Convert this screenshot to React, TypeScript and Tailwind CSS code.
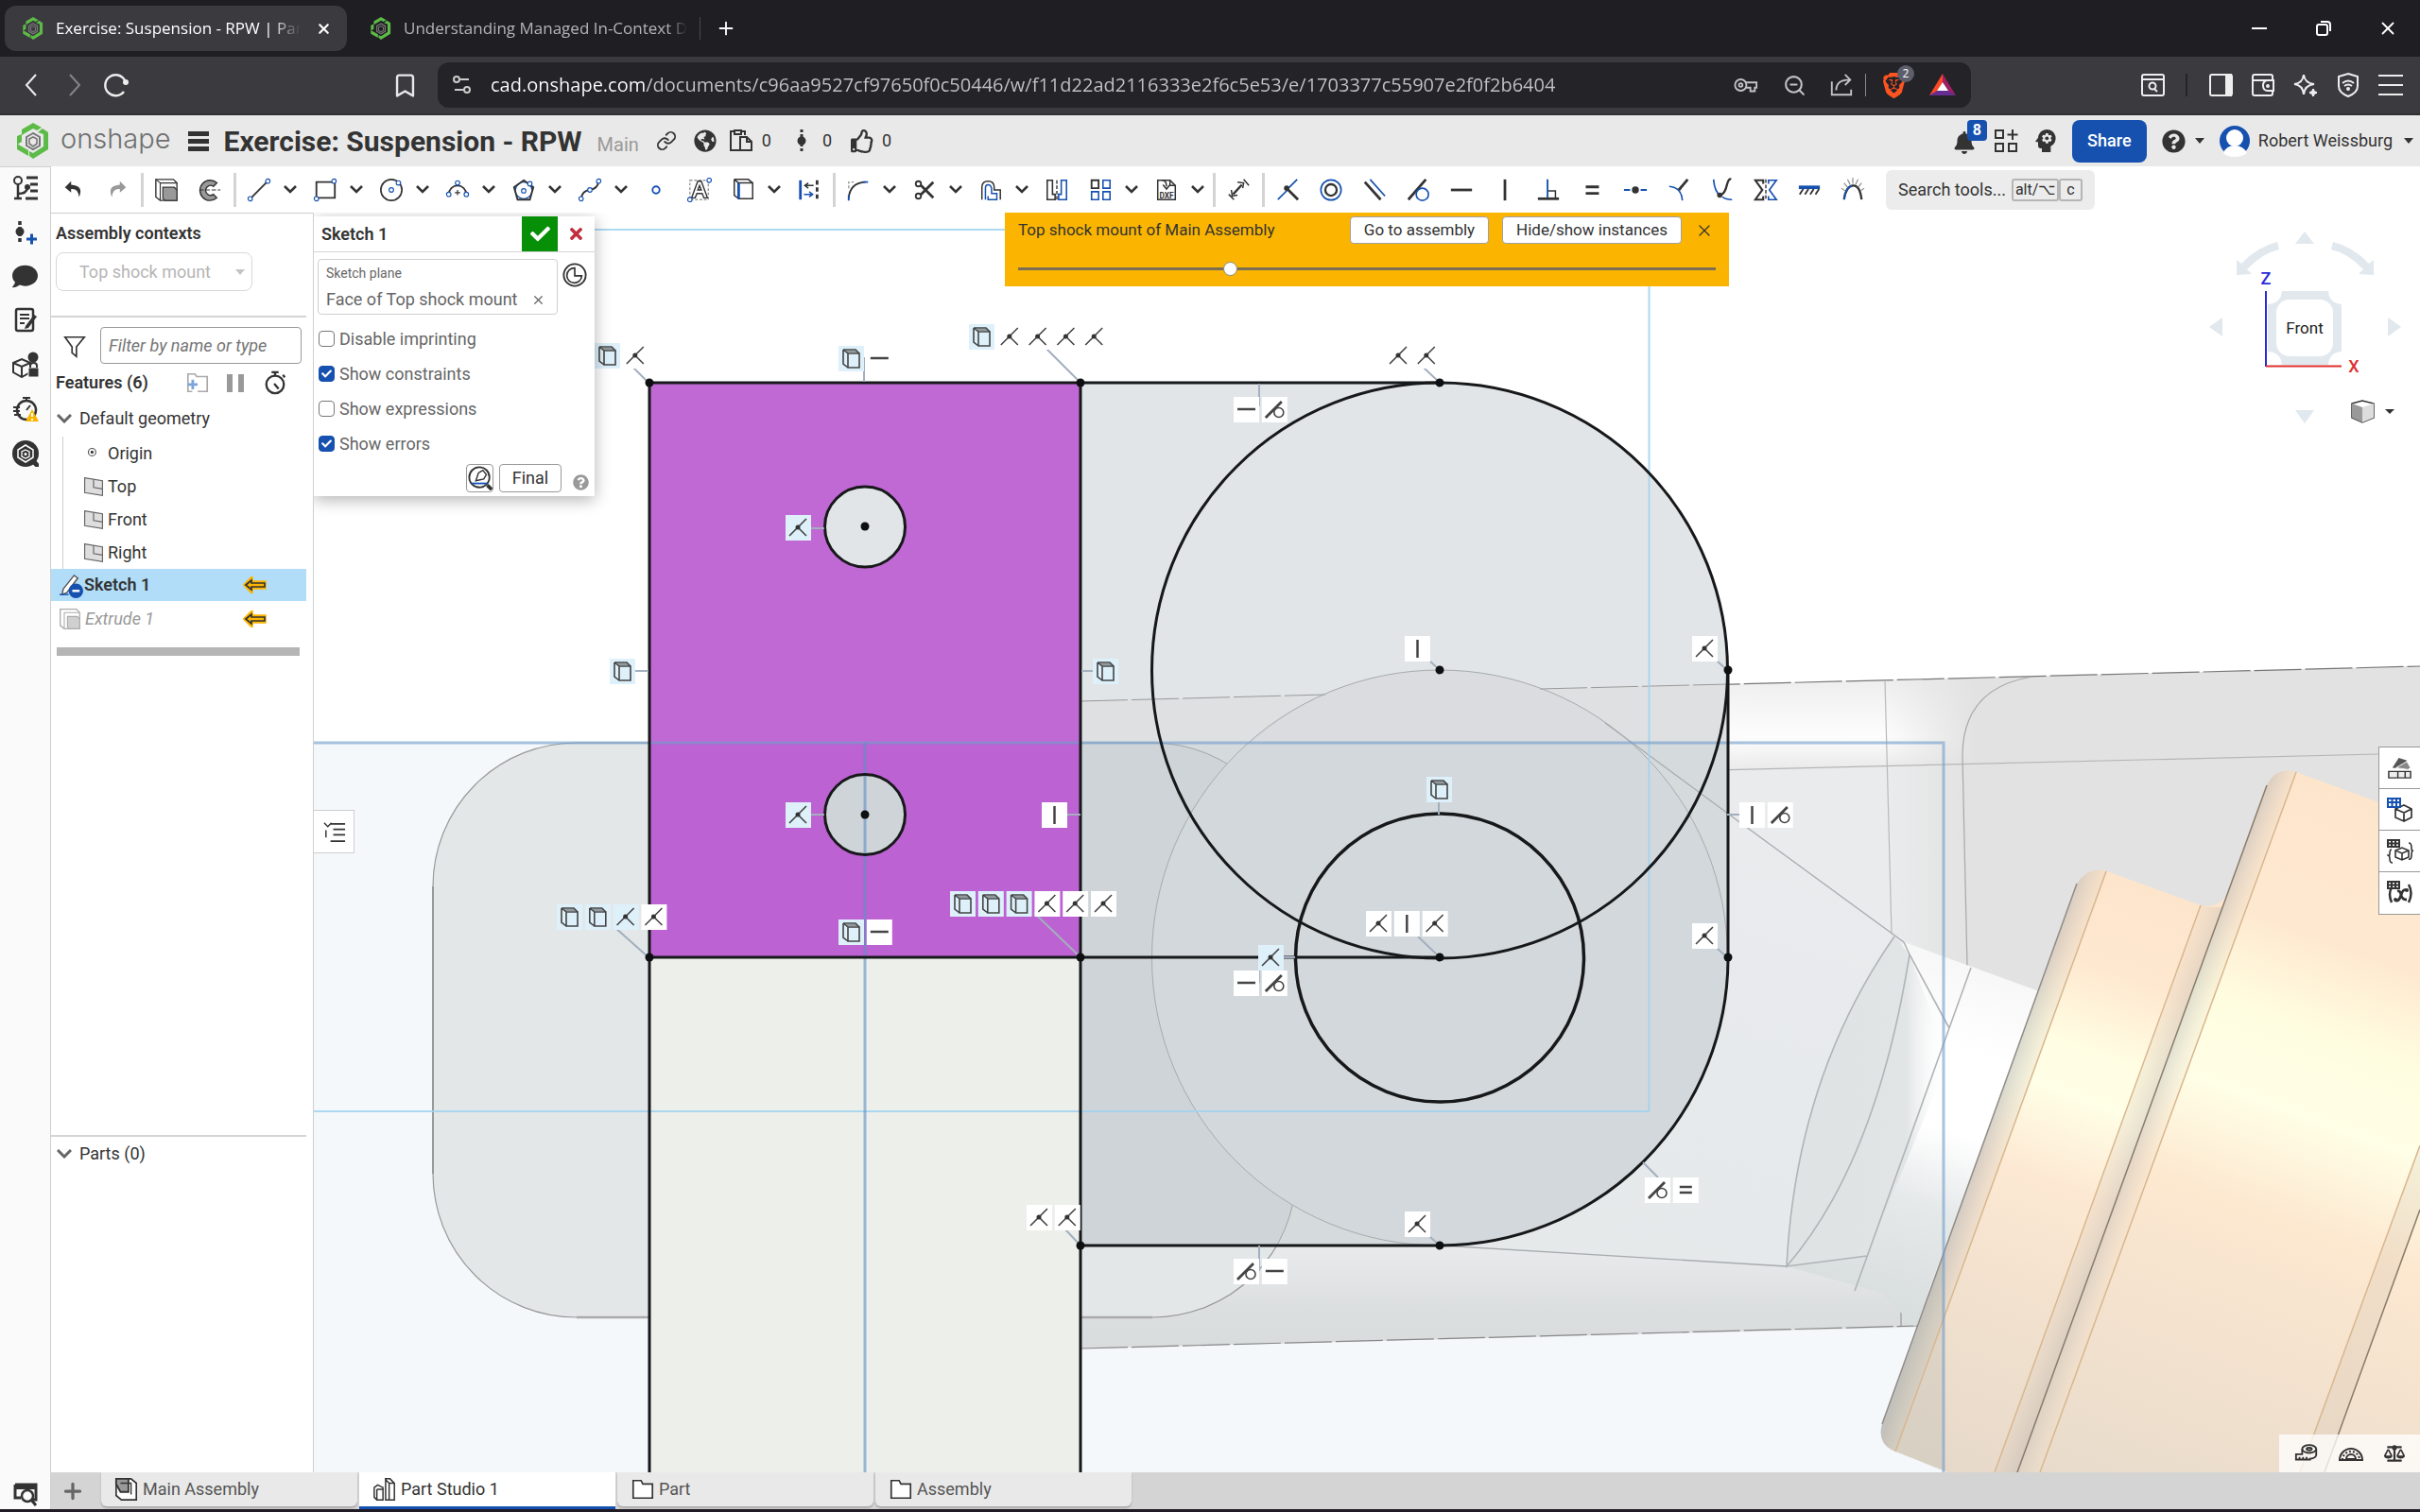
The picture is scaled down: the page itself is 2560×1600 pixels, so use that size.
import type { ReactNode } from 'react'
import { Bookmark, Link, Plus, X, ZoomOut } from 'lucide-react'
import { FaBalanceScale, FaBell, FaComment, FaGlobeAmericas, FaQuestionCircle, FaRegThumbsUp, FaCheck, FaTimes } from 'react-icons/fa'
import { MdPsychology } from 'react-icons/md'
import { SiBrave } from 'react-icons/si'

const INK = '#333333'
const BLUE = '#1651b0'

function Icon({ children, size = 28, className = '' }: { children: ReactNode; size?: number; className?: string }) {
  return (
    <svg width={size} height={size} viewBox="0 0 28 28" fill="none" stroke={INK} strokeWidth="2" className={`shrink-0 ${className}`} aria-hidden="true">
      {children}
    </svg>
  )
}

function Dot({ x, y }: { x: number; y: number }) {
  return <circle cx={x} cy={y} r="2.5" fill="#fff" stroke={BLUE} strokeWidth="1.2" />
}

function OnshapeMark({ size = 26 }: { size?: number }) {
  return (
    <svg width={size} height={size} viewBox="0 0 34 38" className="shrink-0" aria-hidden="true">
      <path d="M17 0 5 7v5L0 14v9l5-3v-7l12-7 4 2 5-3z" fill="#5cbb46" />
      <path d="M22 10 27 6l6 4v18l-16 10-4-3v-5l4 2 11-7V12z" fill="#5cbb46" />
      <path d="M0 22v6l12 7v-6l-7-4z" fill="#5cbb46" />
      <path d="M17 11 10 15v9l7 4 7-4v-9z" fill="none" stroke="#777" strokeWidth="2" />
      <path d="M17 15 13 17v5l4 3 4-3v-5z" fill="none" stroke="#777" strokeWidth="1.6" />
    </svg>
  )
}

function Cube() {
  return (
    <g fill="none" stroke="#444" strokeWidth="1.6">
      <path d="M10 8h12v15H10zM5 4h13l4 4M5 4v15l5 4M5 4l5 4" />
      <path d="M8 6h12" strokeWidth="1" />
    </g>
  )
}

/* ---------- browser chrome ---------- */

function TabStrip() {
  return (
    <div className="flex h-[60px] items-center bg-[#1f1e23] text-[17px] text-white font-['Open_Sans',sans-serif]">
      <div className="ml-[5px] flex h-12 w-[362px] items-center rounded-xl bg-[#3b3a3f] pl-[18px] pr-4">
        <OnshapeMark size={24} />
        <span className="ml-3 min-w-0 flex-1 whitespace-nowrap [mask-image:linear-gradient(to_right,#000_88%,transparent)]">
          Exercise: Suspension - RPW | Part
        </span>
        <button className="ml-4" aria-label="Close tab"><X size={17} strokeWidth={3} /></button>
      </div>
      <div className="flex w-[366px] items-center pl-6 text-[#b4b4b8]">
        <OnshapeMark size={24} />
        <span className="ml-3 whitespace-nowrap [mask-image:linear-gradient(to_right,#000_93%,transparent)]">
          Understanding Managed In-Context D
        </span>
      </div>
      <div className="ml-[7px] h-6 w-px bg-[#4a494e]" />
      <button className="ml-4" aria-label="New tab"><Plus size={22} /></button>
      <div className="ml-auto flex items-center">
        <button aria-label="Minimize" className="flex w-[68px] justify-center"><span className="h-0.5 w-4 bg-white" /></button>
        <button aria-label="Restore" className="flex w-[68px] justify-center">
          <svg width="18" height="18" viewBox="0 0 18 18" fill="none" stroke="#fff" strokeWidth="2"><rect x="2" y="5" width="11" height="11" rx="2" /><path d="M6 2h7q3 0 3 3v7" /></svg>
        </button>
        <button aria-label="Close" className="flex w-[68px] justify-center"><X size={22} strokeWidth={2} /></button>
      </div>
    </div>
  )
}

function NavBar() {
  return (
    <div className="flex h-[62px] items-center border-b-2 border-[#302f34] bg-[#3b3a3f] text-[#e8e8ea]">
      <button aria-label="Back" className="ml-5"><Icon><path d="M18 3 8 14l10 11" stroke="#eee" /></Icon></button>
      <button aria-label="Forward" className="ml-4"><Icon><path d="m10 3 10 11-10 11" stroke="#85848a" /></Icon></button>
      <button aria-label="Reload" className="ml-4">
        <Icon><path d="M23 21A11 11 0 1 1 24 9" stroke="#eee" strokeWidth="2.4" /><circle cx="25" cy="11" r="3" fill="#eee" stroke="none" /></Icon>
      </button>
      <button aria-label="Bookmark" className="ml-[278px]"><Bookmark size={29} strokeWidth={2} /></button>
      <div className="ml-5 flex h-12 flex-1 items-center rounded-xl bg-[#242328] pl-2">
        <Icon className="ml-1"><g stroke="#ccc"><circle cx="8" cy="8" r="3" /><path d="M12 8h9M6 19h9" /><circle cx="19" cy="19" r="3" /></g></Icon>
        <input
          aria-label="Address"
          readOnly
          className="ml-4 min-w-0 flex-1 bg-[linear-gradient(to_right,#fff_163px,#c3c3c7_163px)] bg-clip-text text-xl text-transparent outline-none font-['Open_Sans',sans-serif]"
          value="cad.onshape.com/documents/c96aa9527cf97650f0c50446/w/f11d22ad2116333e2f6c5e53/e/1703377c55907e2f0f2b6404"
        />
        <div className="flex items-center text-[#c3c3c7]">
          <Icon size={26} className="mr-[26px]"><g stroke="#c3c3c7"><circle cx="8" cy="14" r="6.5" /><circle cx="8" cy="14" r="2" /><path d="M13 11h13v6h-2v4h-5v-4h-6" /></g></Icon>
          <ZoomOut size={25} className="mr-6" />
          <Icon size={26} className="mr-3"><g stroke="#c3c3c7"><path d="M3 10v15h22v-6" /><path d="M8 20q0-12 15-12M18 2l6 6-6 6" /></g></Icon>
          <div className="h-6 w-px bg-[#8a898e]" />
          <div className="relative ml-4 mr-6">
            <SiBrave size={27} color="#ff5420" />
            <span className="absolute -right-2 -top-2 flex h-[18px] w-[18px] items-center justify-center rounded-full bg-[#5d5e6c] text-xs text-white font-['Open_Sans',sans-serif]">2</span>
          </div>
          <svg width="28" height="24" viewBox="0 0 28 24" className="mr-4"><path d="M14 0v9L8 19l-8 4z" fill="#ff4724" /><path d="m14 0 14 23-8-4-6-10z" fill="#9e1f63" /><path d="m0 23 8-5h12l8 5z" fill="#662d91" /><path d="m14 9 6 9H8z" fill="#fff" /></svg>
        </div>
      </div>
      <div className="ml-[178px] mr-[17px] flex items-center gap-[17px]">
        <Icon><g stroke="#eee"><rect x="3" y="3" width="23" height="22" rx="2" /><path d="M3 8h23" /><circle cx="14" cy="15" r="3.5" /><path d="m16 18 3 3" /></g></Icon>
        <div className="mx-1 h-6 w-0.5 bg-[#242328]" />
        <Icon><g stroke="#eee"><rect x="3" y="3" width="23" height="22" rx="2" /><path d="M20 3h5v22h-5z" fill="#eee" /></g></Icon>
        <Icon><g stroke="#eee"><path d="M24 9V5q0-2-2-2H5Q3 3 3 5v18q0 2 2 2h17q2 0 2-2v-3M3 9h22v11h-6q-5 0-5-5.5t5-5.5" /><circle cx="19" cy="15" r="1" /></g></Icon>
        <Icon><g stroke="#eee"><path d="M12 3q1 9 11 10-10 1-11 11Q11 14 2 13 11 12 12 3z" /><path d="M22 18q0 4 4 4-4 0-4 4 0-4-4-4 4 0 4-4z" fill="#eee" /></g></Icon>
        <Icon><g stroke="#eee"><path d="m14 2 10 3v10q0 7-10 11Q4 22 4 15V5z" /><path d="M8 12q6-5 12 0M10 15q4-3 8 0" /><circle cx="14" cy="18" r="1" /></g></Icon>
        <Icon><path d="M1 4h26M1 14h26M1 24h26" stroke="#eee" /></Icon>
      </div>
    </div>
  )
}

/* ---------- document header ---------- */

function Header() {
  return (
    <header className="flex h-[54px] items-center bg-[#e9e9e9] text-lg text-[#333]">
      <div className="ml-4 flex items-center gap-2.5">
        <OnshapeMark size={38} />
        <span className="-mt-1 text-[29px] font-light text-[#6f6f6f] font-['Inter',sans-serif]">onshape</span>
      </div>
      <button aria-label="Menu" className="ml-[18px] flex w-[22px] flex-col gap-[3px]">
        <span className="h-[5px] bg-[#333]" /><span className="h-[5px] bg-[#333]" /><span className="h-[5px] bg-[#333]" />
      </button>
      <h1 className="ml-4 mt-0.5 text-[30px] font-bold">Exercise: Suspension - RPW</h1>
      <span className="ml-4 mt-2 text-xl text-[#9a9a9a]">Main</span>
      <Link size={22} className="ml-[18px]" />
      <FaGlobeAmericas size={24} className="ml-[18px]" />
      <Icon className="ml-3"><path d="M8 4H3v20h9M18 8V4h-5M7 3h7v4H7z" /><path d="M13 10h7l5 5v9H13zM20 10v5h5" /></Icon>
      <span className="ml-2">0</span>
      <Icon className="ml-[18px]"><path d="M14 2v24" strokeWidth="3" strokeDasharray="3 2" /><circle cx="14" cy="14" r="4.5" fill={INK} stroke="none" /></Icon>
      <span className="ml-2">0</span>
      <FaRegThumbsUp size={25} className="ml-5" />
      <span className="ml-2">0</span>

      <div className="ml-auto flex items-center">
        <button aria-label="Notifications" className="relative mr-[18px]">
          <FaBell size={24} className="mt-1" />
          <span className="absolute -right-3 -top-2 flex h-[22px] w-[21px] items-center justify-center rounded bg-[#1651b0] text-base font-bold text-white">8</span>
        </button>
        <Icon><path d="M3 3h8v8H3zM3 17h8v8H3zM17 17h8v8h-8zM21 2v11M15.5 7.5h11" /></Icon>
        <MdPsychology size={32} className="ml-3" />
        <button className="ml-3 h-[45px] w-[79px] rounded-lg bg-[#1651b0] text-lg font-medium text-white">Share</button>
        <FaQuestionCircle size={25} className="ml-4" />
        <span className="ml-[10px] border-x-[5px] border-t-[6px] border-x-transparent border-t-[#333]" />
        <svg width="33" height="33" viewBox="0 0 33 33" className="ml-4"><circle cx="16" cy="16" r="16" fill={BLUE} /><circle cx="16" cy="13" r="9" fill="#fff" /><path d="M4 29q3-8 12-8t13 8q-5 4-13 4T4 29z" fill="#fff" /></svg>
        <span className="ml-2 whitespace-nowrap">Robert Weissburg</span>
        <span className="ml-3 mr-[7px] border-x-[5px] border-t-[6px] border-x-transparent border-t-[#333]" />
      </div>
    </header>
  )
}

/* ---------- sketch toolbar ---------- */

type ToolDef = { name: string; icon: ReactNode; menu?: boolean } | 'sep'

const tools: ToolDef[] = [
  { name: 'Undo', icon: <path d="M11 4 4 11l7 6v-4q8-1 9 9 6-13-9-14z" fill={INK} stroke="none" /> },
  { name: 'Redo', icon: <path d="m17 4 7 7-7 6v-4q-8-1-9 9-6-13 9-14z" fill="#999" stroke="none" /> },
  'sep',
  { name: 'Extrude', icon: <><path d="M2 2h20l4 4v20H7l-5-4z" strokeWidth="1.5" /><path d="M7 6h19M7 6v20M2 2l5 4" strokeWidth="1.2" /><path d="M10 11h13l3 3v12H13l-3-2z" fill="#999" strokeWidth="1.3" /></> },
  { name: 'Revolve', icon: <><path d="M22 6A11.5 11.5 0 1 0 22 23l-4-4a5.5 5.5 0 1 1 0-9z" fill="#999" strokeWidth="1.5" /><path d="M2 14h24" strokeWidth="1.2" strokeDasharray="5 2" /></> },
  'sep',
  { name: 'Line', menu: true, icon: <><path d="M4 24 24 4" /><Dot x={4} y={24} /><Dot x={24} y={4} /></> },
  { name: 'Rectangle', menu: true, icon: <><path d="M4 5h21v18H4z" /><Dot x={4} y={24} /><Dot x={24} y={4} /></> },
  { name: 'Circle', menu: true, icon: <><circle cx="14" cy="14" r="12" strokeWidth="1.8" /><Dot x={14} y={14} /><Dot x={22} y={6} /></> },
  { name: 'Arc', menu: true, icon: <><path d="M4 19A10 10 0 0 1 24 19" strokeWidth="1.8" /><path d="M14 14v6M11 17h6" strokeWidth="1.3" /><Dot x={4} y={19} /><Dot x={14} y={6} /><Dot x={24} y={19} /></> },
  { name: 'Polygon', menu: true, icon: <><circle cx="14" cy="14.5" r="9.5" stroke={BLUE} strokeWidth="1.3" /><path d="m14 3 11 8-4 14H7L3 11z" /><Dot x={14} y={15} /><Dot x={21} y={7} /></> },
  { name: 'Spline', menu: true, icon: <><path d="M4 24Q5 15 14 14T24 4" /><Dot x={4} y={24} /><Dot x={14} y={14} /><Dot x={24} y={4} /></> },
  { name: 'Point', icon: <circle cx="14" cy="14" r="4" stroke={BLUE} /> },
  { name: 'Text', icon: <><path d="M3 3h21v22H3z" stroke="#999" strokeWidth="1.5" strokeDasharray="3 2" /><path d="m5 23 7-19h4l7 19h-4l-2-5h-6l-2 5zM12 14h4l-2-5z" strokeWidth="1.5" fill="#fff" /><Dot x={3} y={25} /><Dot x={25} y={3} /></> },
  { name: 'Use', menu: true, icon: <><path d="M9 6h16v18H9zM4 2h16l5 4M4 2v18l5 4M4 2l5 4" strokeWidth="1.6" /><path d="M9 6v18" stroke={BLUE} strokeWidth="3" /></> },
  { name: 'Construction', icon: <><path d="M4 3v22" stroke={BLUE} strokeWidth="3" /><path d="M23 3v22" strokeWidth="3" strokeDasharray="5 3" /><path d="M9 9h10M13 6 9 9l4 3" strokeWidth="1.6" /><path d="M8 19h10M14 16l4 3-4 3" stroke={BLUE} strokeWidth="1.6" /></> },
  'sep',
  { name: 'Fillet', menu: true, icon: <><path d="M3 24Q4 6 22 5" /><path d="M3 12V5h7" stroke="#999" strokeWidth="1.5" strokeDasharray="3 2" /><path d="M3 20v6M19 5h6" stroke={BLUE} /></> },
  { name: 'Trim', menu: true, icon: <><path d="M10 9 24 23M10 19 24 5" strokeWidth="3" /><circle cx="7" cy="7" r="3" /><circle cx="7" cy="21" r="3" /></> },
  { name: 'Offset', menu: true, icon: <><path d="M4 25V11q0-7 7-7t7 7v3h7v11" strokeWidth="1.6" /><path d="M8 25V12q0-4 3-4t4 4v6h6v7H11v-4" stroke={BLUE} strokeWidth="1.6" /></> },
  { name: 'Mirror', icon: <><path d="M3 3h6v16h3v6H3z" strokeWidth="1.7" /><path d="M25 3h-6v16h-3v6h9z" stroke={BLUE} strokeWidth="1.7" /><path d="M14 3v22" strokeWidth="1.5" strokeDasharray="4 2" /></> },
  { name: 'Pattern', menu: true, icon: <><path d="M4 3h8v9H4z" /><path d="M17 3h8v9h-8zM4 16h8v9H4zM17 16h8v9h-8z" stroke={BLUE} strokeWidth="1.7" /></> },
  { name: 'Insert DXF', menu: true, icon: <><path d="M4 25V3h14l6 6v16z" strokeWidth="1.6" /><path d="M18 3v6h6M9 3q5 0 5 7M10 8l4 5 4-5" strokeWidth="1.6" /><text x="14" y="24" textAnchor="middle" fontSize="9" fontWeight="700" fill={INK} stroke="none">DXF</text></> },
  'sep',
  { name: 'Dimension', icon: <><path d="m8 19 10-11" strokeWidth="2.5" /><path d="m6 14 1 7 6-1M13 5l7 1-1 6M20 2l6 7M3 19l6 6" strokeWidth="1.6" /></> },
  'sep',
  { name: 'Coincident', icon: <><path d="M14 14 3 25M15 12 25 2" stroke={BLUE} strokeWidth="1.8" /><path d="m13 12 13 13" strokeWidth="3" /><circle cx="13" cy="12" r="3" fill={INK} stroke="none" /></> },
  { name: 'Concentric', icon: <><circle cx="14" cy="14" r="11.5" stroke={BLUE} strokeWidth="1.8" /><circle cx="14" cy="14" r="6.5" strokeWidth="2.5" /></> },
  { name: 'Parallel', icon: <><path d="m3 5 18 20" strokeWidth="3" /><path d="m9 2 17 19" stroke={BLUE} strokeWidth="1.8" /></> },
  { name: 'Tangent', icon: <><path d="M3 25 23 2" strokeWidth="3" /><circle cx="19" cy="19" r="7" stroke={BLUE} strokeWidth="1.8" /></> },
  { name: 'Horizontal', icon: <path d="M2 14h24" strokeWidth="3" /> },
  { name: 'Vertical', icon: <path d="M14 2v24" strokeWidth="3" /> },
  { name: 'Perpendicular', icon: <><path d="M2 24h24" strokeWidth="3" /><path d="M13 2v21" stroke={BLUE} /><path d="M14 15h8v8" strokeWidth="1.6" /></> },
  { name: 'Equal', icon: <path d="M7 10.5h15M7 18h15" strokeWidth="3" /> },
  { name: 'Midpoint', icon: <><path d="M1 14h7M20 14h7" stroke={BLUE} /><circle cx="14" cy="14" r="4" fill={INK} stroke="none" /></> },
  { name: 'Normal', icon: <><path d="M3 10q14 1 15 16" stroke={BLUE} strokeWidth="1.8" /><path d="m14 14 10-12" strokeWidth="3" /></> },
  { name: 'Pierce', icon: <><path d="M4 2q1 14 8 19M14 22q4 3 11 3" stroke={BLUE} strokeWidth="1.8" /><path d="M12 20Q17 18 19 9t5-7" strokeWidth="2.5" /><circle cx="11" cy="20" r="3" fill={INK} stroke="none" /></> },
  { name: 'Symmetric', icon: <><path d="M11 7V3H2l8 11-8 11h9v-4" strokeWidth="2.3" /><path d="M17 7V3h9l-8 11 8 11h-9v-4" stroke={BLUE} strokeWidth="1.8" /><path d="M14 2v24" strokeWidth="1.5" strokeDasharray="4 2" /></> },
  { name: 'Fix', icon: <><path d="M2 11h24" stroke={BLUE} strokeWidth="4" /><path d="m7 13-4 6M13 13l-4 6M19 13l-4 6M25 13l-4 6" /></> },
  { name: 'Curvature', icon: <><path d="M4 25Q6 10 14 9t10 16" strokeWidth="2.5" /><path d="M4 25Q6 11 13 9" stroke={BLUE} /><path d="M5 15 1 12M8 11 4 6M11 8 8 2M14 7V0M17 8l3-6M20 11l4-5M23 15l4-3" strokeWidth="1.2" stroke="#888" /></> },
]

function Toolbar() {
  return (
    <div className="flex h-[49px] items-center bg-white pl-px">
      {tools.map((t, i) =>
        t === 'sep' ? (
          <div key={i} className="ml-0.5 mr-px h-9 w-[3px] bg-[#d4d4d4]" />
        ) : (
          <div key={i} className="flex items-center">
            <button aria-label={t.name} className="flex w-[46px] justify-center">
              <Icon size={26}>{t.icon}</Icon>
            </button>
            {t.menu && (
              <button aria-label={`${t.name} options`} className="w-6 pl-[3px]">
                <svg width="14" height="9" viewBox="0 0 14 9" fill="none" stroke={INK} strokeWidth="2.6"><path d="m1 1 6 6 6-6" /></svg>
              </button>
            )}
          </div>
        ),
      )}
      <button className="ml-3 flex h-[42px] items-center rounded-md bg-[#ececec] px-[13px] text-lg text-[#333]">
        Search tools...
        <kbd className="ml-1.5 rounded-[3px] border-2 border-[#b5b5b5] px-0.5 text-base leading-5 font-['Roboto',sans-serif]">alt/⌥</kbd>
        <kbd className="rounded-[3px] border-2 border-[#b5b5b5] px-1.5 text-base leading-5 font-['Roboto',sans-serif]">c</kbd>
      </button>
    </div>
  )
}

/* ---------- left rail and feature list ---------- */

function Rail() {
  return (
    <nav className="flex w-[54px] shrink-0 flex-col items-center border-r border-t border-[#cfcfcf] bg-[#fafafa] pt-2 text-[#333]">
      <div className="flex flex-col items-center gap-[19px]">
        <Icon><circle cx="6" cy="6" r="4" /><path d="M6 10v16M2 25h8M6 20q9 0 10-6" strokeWidth="2.5" /><circle cx="16" cy="13" r="3" fill={INK} stroke="none" /><path d="M15 3h12M19 10h8M19 17h8M14 25h13" strokeWidth="3" /></Icon>
        <Icon><path d="M8 2v24" strokeWidth="3.5" strokeDasharray="4 2" /><circle cx="8" cy="13" r="4.5" fill={INK} stroke="none" /><path d="M15 21h11M20.5 15.5v11" stroke={BLUE} strokeWidth="3" /></Icon>
        <FaComment size={27} />
        <Icon><rect x="4" y="2" width="18" height="23" rx="2" strokeWidth="2.5" /><path d="M8 8h10M8 12h10M8 17h5" /><path d="m14 20 9-12 3 2-9 12-4 1z" fill={INK} stroke="none" /></Icon>
        <Icon><path d="m1 12 9-4 9 4v10l-9 5-9-5zM1 12l9 4 9-4M10 16v11" /><circle cx="22" cy="6" r="5.5" fill={INK} stroke="none" /><rect x="17" y="17" width="11" height="10" fill={INK} stroke="#fafafa" strokeWidth="1" /><path d="M19 17v-2q0-3 3.5-3t3.500 3v2" /></Icon>
        <Icon><circle cx="15" cy="15" r="10" strokeWidth="2.5" /><path d="M11 2h8M15 2v3M15 15l4-5M1 12h7M1 16h7M2 20h7" /><path d="m21 14 7 13H14z" fill="#fbb500" stroke="none" /><path d="M21 18v4M21 24v2" stroke="#fff" /></Icon>
        <Icon><circle cx="14" cy="14" r="14" fill={INK} stroke="none" /><path d="m20 20 8 8" strokeWidth="5" /><path d="m14 5 8 5v8l-8 5-8-5v-8z" stroke="#fff" strokeWidth="1.5" /><path d="m14 10 4 2v5l-4 2-4-2v-5z" stroke="#fff" strokeWidth="1.3" /><circle cx="14" cy="14.5" r="1.5" fill="#fff" stroke="none" /></Icon>
      </div>
      <Icon className="mb-0.5 mt-auto"><path d="M3 4h22v16h-4M3 4v14h6" strokeWidth="3" /><path d="M3 4h22v5H3z" fill={INK} stroke="none" /><circle cx="16" cy="16" r="6" strokeWidth="2.5" fill="#fafafa" /><path d="m20 20 5 6" strokeWidth="3" /></Icon>
    </nav>
  )
}

function PlaneIcon() {
  return <Icon size={22} className="mr-1"><path d="M2 2 26 6v20L2 22z" fill="#dedede" stroke="#666" strokeWidth="1.5" /><path d="M14 4v11l12 2" stroke="#666" strokeWidth="1.5" /></Icon>
}

function ContextArrow() {
  return (
    <svg width="26" height="18" viewBox="0 0 26 18" className="ml-auto mr-[41px]"><path d="M2 9 9 2v4h14v6H9v4z" fill="#fbb500" stroke="#fbb500" strokeWidth="3.5" /><path d="M3 9 9 4v3h14v4H9v3z" fill="#fbb500" stroke={INK} strokeWidth="1.7" /></svg>
  )
}

function FeaturePanel() {
  return (
    <aside className="flex w-[278px] shrink-0 flex-col border-r border-t border-[#cfcfcf] bg-white text-lg text-[#333]">
      <div className="mr-[7px] h-[110px] border-b-2 border-[#d4d4d4] pl-[5px]">
        <h2 className="mb-1.5 mt-[7px] text-lg font-semibold leading-7"><label htmlFor="ctx">Assembly contexts</label></h2>
        <div className="relative w-[208px]">
          <select id="ctx" disabled className="h-[41px] w-full appearance-none rounded-lg border border-[#d8d8d8] bg-white pl-6 text-[#b5b5b5] opacity-100">
            <option>Top shock mount</option>
          </select>
          <span className="absolute right-2 top-[18px] border-x-[5px] border-t-[6px] border-x-transparent border-t-[#c4c4c4]" />
        </div>
      </div>
      <div className="mt-2.5 flex items-center pl-3">
        <Icon size={26}><path d="M3 4h22l-9 11v11l-5-4v-7z" strokeWidth="1.8" /></Icon>
        <input aria-label="Filter" placeholder="Filter by name or type" className="ml-3.5 h-[39px] w-[213px] rounded border border-[#999] px-2 italic placeholder:text-[#757575]" />
      </div>
      <div className="mt-0.5 flex h-9 items-center pl-[5px]">
        <h2 className="text-lg font-semibold">Features (6)</h2>
        <Icon size={26} className="ml-auto mr-[18px]"><path d="M8 24H3V4h8l2 3h12v17H14" stroke="#aaa" strokeWidth="1.8" /><path d="M3 16h11M8.5 10.5v11" stroke="#7ba3dc" strokeWidth="3" /></Icon>
        <span className="mr-5 flex gap-1.5"><span className="h-[19px] w-[6px] bg-[#999]" /><span className="h-[19px] w-[6px] bg-[#999]" /></span>
        <Icon size={26} className="mr-[27px]"><circle cx="14" cy="16" r="10" strokeWidth="2.5" /><path d="M10 2h8M14 2v4M23 5l2 3M13 15l5 6" strokeWidth="2.5" /></Icon>
      </div>
      <div className="flex h-[39px] items-center pl-1.5">
        <svg width="16" height="10" viewBox="0 0 16 10" fill="none" stroke="#666" strokeWidth="3"><path d="m1 1 7 7 7-7" /></svg>
        <span className="ml-2">Default geometry</span>
      </div>
      <ul className="ml-3 border-l border-[#cfcfcf] pl-[21px]">
        <li className="flex h-[35px] items-center">
          <Icon size={22} className="mr-1"><circle cx="12" cy="12" r="5" stroke="#555" strokeWidth="1.5" /><circle cx="12" cy="12" r="2" fill={INK} stroke="none" /></Icon>Origin
        </li>
        <li className="flex h-[35px] items-center"><PlaneIcon />Top</li>
        <li className="flex h-[35px] items-center"><PlaneIcon />Front</li>
        <li className="flex h-[35px] items-center"><PlaneIcon />Right</li>
      </ul>
      <div className="mr-[7px] flex h-[34px] items-center bg-[#b1ddf8] pl-2 text-lg font-semibold">
        <Icon size={27}><path d="m5 18 12-15 4 3L9 22l-5 2z" fill="#fff" stroke="#555" strokeWidth="1.5" /><path d="M1 24h10" stroke={BLUE} strokeWidth="1.5" /><circle cx="19" cy="20" r="8" fill={BLUE} stroke="none" /><path d="M15 20h8" stroke="#fff" strokeWidth="2.5" /></Icon>
        Sketch 1
        <ContextArrow />
      </div>
      <div className="mr-[7px] flex h-[37px] items-center pl-2 italic text-[#999]">
        <Icon size={24} className="mr-1"><g stroke="#aaa"><path d="M2 2h20l4 4v20H7l-5-4z" strokeWidth="1.5" /><path d="M7 6h19M7 6v20" strokeWidth="1.2" /><path d="M11 11h12l3 3v12H13l-2-2z" fill="#d0d0d0" strokeWidth="1.3" /></g></Icon>
        Extrude 1
        <ContextArrow />
      </div>
      <div className="ml-1.5 mr-[14px] mt-3 h-[9px] bg-[#b5b5b5]" />
      <div className="mr-[7px] mt-auto h-[357px] border-t-2 border-[#d4d4d4] pl-1.5">
        <div className="flex h-9 items-center">
          <svg width="16" height="10" viewBox="0 0 16 10" fill="none" stroke="#666" strokeWidth="3"><path d="m1 1 7 7 7-7" /></svg>
          <span className="ml-2">Parts (0)</span>
        </div>
      </div>
    </aside>
  )
}

/* ---------- floating panels over the canvas ---------- */

function Check({ label, checked }: { label: string; checked?: boolean }) {
  return (
    <label className="flex h-[37px] items-center gap-[5px] text-lg text-[#666]">
      <span className="relative flex h-[17px] w-[17px]">
        <input type="checkbox" defaultChecked={checked} className="h-[17px] w-[17px] appearance-none rounded border border-[#777] bg-white checked:border-[#1651b0] checked:bg-[#1651b0]" />
        {checked && <FaCheck size={11} color="#fff" className="pointer-events-none absolute left-[3px] top-[3px]" />}
      </span>
      {label}
    </label>
  )
}

function SketchDialog() {
  return (
    <section className="absolute left-0 top-1 w-[297px] bg-white shadow-[0_4px_16px_rgba(0,0,0,0.3)]">
      <div className="flex h-[38px] items-center border-b border-[#d4d4d4] pl-2">
        <h2 className="text-lg font-semibold text-[#333]">Sketch 1</h2>
        <button aria-label="Accept" className="ml-auto flex h-[37px] w-[38px] items-center justify-center bg-[#078f07] text-white"><FaCheck size={21} /></button>
        <button aria-label="Cancel" className="ml-2.5 mr-2.5 text-[#c1303d]"><FaTimes size={19} /></button>
      </div>
      <div className="flex px-1 pt-[7px]">
        <div className="h-[59px] w-[254px] rounded border border-[#cfcfcf] px-2 text-[#666]">
          <p className="mt-1 text-sm leading-5">Sketch plane</p>
          <p className="mt-1.5 flex items-center text-lg leading-6">Face of Top shock mount<X size={15} className="ml-auto mr-1" /></p>
        </div>
        <Icon size={26} className="ml-[5px] mt-1"><circle cx="14" cy="14" r="12.5" /><path d="M14 6v9h8A8.5 8.5 0 1 1 14 6z" strokeWidth="1.8" /></Icon>
      </div>
      <div className="pl-[5px] pt-[7px]">
        <Check label="Disable imprinting" />
        <Check label="Show constraints" checked />
        <Check label="Show expressions" />
        <Check label="Show errors" checked />
      </div>
      <div className="flex items-center pb-1 pt-[3px]">
        <button aria-label="Inspect sketch" className="ml-[161px] flex h-[30px] w-[29px] items-center justify-center rounded border border-[#999]">
          <Icon size={26}><circle cx="13" cy="13" r="11.5" /><path d="m9 17 3-9 5-3 4 5-3 5z" strokeWidth="1.5" /><path d="M4 20h18" stroke={BLUE} /><path d="m22 22 5 5" strokeWidth="4" /></Icon>
        </button>
        <button className="ml-1.5 h-[30px] w-[66px] rounded border border-[#999] text-lg leading-6 text-[#333]">Final</button>
        <FaQuestionCircle size={17} color="#999" className="ml-3 mt-2" />
      </div>
    </section>
  )
}

function ContextBanner() {
  return (
    <section className="absolute left-[731px] top-0 h-[78px] w-[766px] bg-[#fbb500] px-3.5 pt-1 text-[17px] text-[#333]">
      <div className="flex items-center">
        <span>Top shock mount of Main Assembly</span>
        <button className="ml-auto h-[29px] rounded border border-[#a0a0a0] bg-white px-3.5">Go to assembly</button>
        <button className="ml-3.5 h-[29px] rounded border border-[#a0a0a0] bg-white px-3.5">Hide/show instances</button>
        <button aria-label="Close banner" className="ml-3.5 mr-0.5"><X size={20} strokeWidth={1.5} /></button>
      </div>
      <input
        type="range"
        aria-label="Context transparency"
        min={0}
        max={100}
        defaultValue={30}
        className="mt-[25px] block h-[3px] w-full appearance-none bg-[#7a6f55] [&::-webkit-slider-thumb]:h-[15px] [&::-webkit-slider-thumb]:w-[15px] [&::-webkit-slider-thumb]:appearance-none [&::-webkit-slider-thumb]:rounded-full [&::-webkit-slider-thumb]:border [&::-webkit-slider-thumb]:border-[#888] [&::-webkit-slider-thumb]:bg-white"
      />
    </section>
  )
}

function SidePanels() {
  return (
    <div className="absolute right-0 top-[565px] flex w-[44px] flex-col divide-y divide-[#999] border border-r-0 border-[#999] bg-white">
      <button aria-label="Appearance" className="flex h-11 items-center justify-center"><Icon size={27}><path d="M6 14 13 3l9 3-4 9z" fill="#555" stroke="none" /><path d="m10 14 12-7 4 7-3 2z" fill="#888" stroke="#fff" strokeWidth="1" /><path d="M2 18h24v7H2zM12 18v7M20 18v7" strokeWidth="1.5" fill="#eee" /></Icon></button>
      <button aria-label="Configurations" className="flex h-11 items-center justify-center"><Icon size={28}><path d="m9 13 9-4 8 4v9l-8 4-9-4zM9 13l9 4 8-4M18 17v9" strokeWidth="1.7" fill="#fff" /><path d="M1 2h13v9H1z" fill="#fff" stroke={BLUE} /><path d="M1 6h13M5.5 2v9M10 2v9" stroke={BLUE} /></Icon></button>
      <button aria-label="Configured features" className="flex h-11 items-center justify-center"><Icon size={28}><path d="m9 13 7-3 7 3v7l-7 3-7-3zM9 13l7 3 7-3M16 16v7M5 12q-2 0-2 4t-2 2q2 0 2 4t3 4M23 5q3 0 3 5t2 3q-2 0-2 5t-3 4" strokeWidth="1.6" /><path d="M1 2h12v7H1z" fill="#fff" /><path d="M1 5.5h12M5 2v7M9 2v7" /></Icon></button>
      <button aria-label="Variables" className="flex h-11 items-center justify-center"><Icon size={28}><path d="M5 8q-4 7 0 16M23 5q5 9 0 19" strokeWidth="2.5" /><path d="M9 22q4 1 6-6t6-5M11 12q3-1 4 4t6 5" strokeWidth="2.8" /><circle cx="9" cy="21" r="2" fill={INK} stroke="none" /><circle cx="21" cy="11" r="2" fill={INK} stroke="none" /><path d="M1 2h12v7H1z" fill="#fff" /><path d="M1 5.5h12M5 2v7M9 2v7" /></Icon></button>
    </div>
  )
}

/* ---------- model drawing ---------- */

type Glyph = 'cube' | 'coin' | 'coinBlue' | 'h' | 'v' | 'tan' | 'eq'

const constraints: [number, number, Glyph[]][] = [
  [629, 363, ['cube', 'coin']],
  [887, 366, ['cube', 'h']],
  [1025, 343, ['cube', 'coin', 'coin', 'coin', 'coin']],
  [1466, 363, ['coin', 'coin']],
  [1305, 420, ['h', 'tan']],
  [831, 545, ['coinBlue']],
  [645, 697, ['cube']],
  [1156, 697, ['cube']],
  [831, 849, ['coinBlue']],
  [1102, 849, ['v']],
  [589, 957, ['cube', 'cube', 'coinBlue', 'coin']],
  [1005, 943, ['cube', 'cube', 'cube', 'coin', 'coin', 'coin']],
  [887, 973, ['cube', 'h']],
  [1486, 673, ['v']],
  [1790, 673, ['coin']],
  [1509, 822, ['cube']],
  [1840, 849, ['v', 'tan']],
  [1445, 964, ['coin', 'v', 'coin']],
  [1790, 977, ['coin']],
  [1331, 1000, ['coinBlue']],
  [1305, 1027, ['h', 'tan']],
  [1740, 1246, ['tan', 'eq']],
  [1486, 1282, ['coin']],
  [1305, 1332, ['tan', 'h']],
  [1086, 1275, ['coin', 'coin']],
]

const leaders =
  'M670 389l16 16M914 378v26M1107 369l35 35M1506 389l17 16M1332 406v24M858 559h14M672 710h14M1144 710h13M858 862h14M1129 862h14' +
  'M650 981l36 32M1094 966l49 47M1513 700l10 9M1817 700l10 9M1522 849v13M1827 862h14M1500 991l23 22M1817 1004l10 9M1358 1013h12' +
  'M1332 1014v26M1738 1230l16 16M1513 1309l10 9M1332 1318v27M1126 1300l17 18'

const points = [
  [687, 405], [1143, 405], [1523, 405], [915, 557], [915, 862], [1523, 709], [1828, 709],
  [687, 1013], [1143, 1013], [1523, 1013], [1828, 1013], [1143, 1318], [1523, 1318],
]

function GlyphShape({ kind }: { kind: Glyph }) {
  if (kind === 'cube') return <Cube />
  if (kind === 'h') return <path d="M4 13h19" strokeWidth="2.5" />
  if (kind === 'v') return <path d="M13.5 4v19" strokeWidth="2.5" />
  if (kind === 'eq') return <path d="M7 10h13M7 16h13" strokeWidth="2.5" />
  if (kind === 'tan') return <><path d="M4 22 21 5" strokeWidth="2.8" /><circle cx="18" cy="16.5" r="5" /></>
  return <><path d="m4 22 9-9 9-9M13 13l9 9" /><circle cx="13" cy="13" r="2.5" fill="#333" stroke="none" /></>
}

function Model() {
  return (
    <svg className="absolute inset-0 h-full w-full" viewBox="332 225 2228 1333" preserveAspectRatio="xMinYMin slice" aria-label="Sketch view">
      <defs>
        <linearGradient id="armTop" x1="0" y1="712" x2="0" y2="815" gradientUnits="userSpaceOnUse">
          <stop offset="0" stopColor="#ececec" /><stop offset="0.65" stopColor="#fdfdfd" /><stop offset="1" stopColor="#e9e9ea" />
        </linearGradient>
        <linearGradient id="armTopL" x1="1143" y1="0" x2="2000" y2="0" gradientUnits="userSpaceOnUse">
          <stop offset="0" stopColor="#dfe0e2" /><stop offset="0.6" stopColor="#dfe0e2" stopOpacity="0.7" /><stop offset="0.85" stopColor="#fff" stopOpacity="0" />
        </linearGradient>
        <linearGradient id="armTopR" x1="1994" y1="0" x2="2090" y2="0" gradientUnits="userSpaceOnUse">
          <stop offset="0" stopColor="#e2e2e2" stopOpacity="0" /><stop offset="1" stopColor="#e2e2e2" />
        </linearGradient>
        <linearGradient id="armBottom" x1="0" y1="1320" x2="0" y2="1425" gradientUnits="userSpaceOnUse">
          <stop offset="0" stopColor="#e9eaec" /><stop offset="0.6" stopColor="#dcdfe0" /><stop offset="1" stopColor="#d8dcdd" />
        </linearGradient>
        <linearGradient id="link" x1="1800" y1="850" x2="1650" y2="1330" gradientUnits="userSpaceOnUse">
          <stop offset="0" stopColor="#e9ebed" /><stop offset="1" stopColor="#e5e9ea" />
        </linearGradient>
        <linearGradient id="neck" x1="2120" y1="1030" x2="2000" y2="1380" gradientUnits="userSpaceOnUse">
          <stop offset="0" stopColor="#f7f7f7" /><stop offset="0.25" stopColor="#fff" /><stop offset="0.48" stopColor="#fff" /><stop offset="0.7" stopColor="#e6e9ea" /><stop offset="1" stopColor="#d9dedf" />
        </linearGradient>
        <linearGradient id="lens" x1="1950" y1="0" x2="2060" y2="0" gradientUnits="userSpaceOnUse">
          <stop offset="0" stopColor="#dfe3e4" /><stop offset="0.6" stopColor="#e1e5e6" /><stop offset="1" stopColor="#fff" stopOpacity="0" />
        </linearGradient>
        <linearGradient id="ringA" x1="2228" y1="922" x2="2005" y2="1536" gradientUnits="userSpaceOnUse">
          <stop offset="0" stopColor="#fde5cc" /><stop offset="0.15" stopColor="#fee8d0" /><stop offset="0.28" stopColor="#fffde2" /><stop offset="0.36" stopColor="#fffee6" /><stop offset="0.5" stopColor="#fde9d3" /><stop offset="0.7" stopColor="#f2e1ce" /><stop offset="1" stopColor="#e7d9ca" />
        </linearGradient>
        <linearGradient id="ringB" x1="2429" y1="817" x2="2158" y2="1558" gradientUnits="userSpaceOnUse">
          <stop offset="0" stopColor="#fde5cc" /><stop offset="0.2" stopColor="#fee9d0" /><stop offset="0.32" stopColor="#fffde0" /><stop offset="0.43" stopColor="#fffee6" /><stop offset="0.57" stopColor="#fde8d0" /><stop offset="0.78" stopColor="#f2e1ce" /><stop offset="1" stopColor="#e8dbcb" />
        </linearGradient>
        <linearGradient id="edgeL" x1="2197" y1="935" x2="2228" y2="946" gradientUnits="userSpaceOnUse">
          <stop offset="0" stopColor="#a3a8ae" stopOpacity="0.4" /><stop offset="1" stopColor="#f5dfc5" stopOpacity="0.2" />
        </linearGradient>
        <linearGradient id="edgeM" x1="2328" y1="958" x2="2360" y2="970" gradientUnits="userSpaceOnUse">
          <stop offset="0" stopColor="#e8d6c2" stopOpacity="0.3" /><stop offset="1" stopColor="#b4b0ac" stopOpacity="0.45" />
        </linearGradient>
        <linearGradient id="edgeR" x1="2398" y1="831" x2="2427" y2="842" gradientUnits="userSpaceOnUse">
          <stop offset="0" stopColor="#a3a8ae" stopOpacity="0.4" /><stop offset="1" stopColor="#f5dfc5" stopOpacity="0.2" />
        </linearGradient>
        <clipPath id="part"><path d="M1143 405H1523A304.5 304.5 0 0 1 1828 709V1013A304.5 304.5 0 0 1 1523 1318H1143z" /></clipPath>
        <clipPath id="planeClip"><path d="M332 786H2056V1558H332z" /></clipPath>
      </defs>

      <path d="M332 225H2560V1558H332z" fill="#fff" />
      <path d="M332 786H2056V1558H332z" fill="#f4f8fb" />

      {/* control arm behind the sketch */}
      <path d="M1143 742 2560 705V1390L1143 1427z" fill="#e2e2e2" />
      <path d="M1143 742 2090 717V808L1143 832z" fill="url(#armTop)" />
      <path d="M1143 742 2000 720V810L1143 832z" fill="url(#armTopL)" />
      <path d="M1994 720 2560 705V800L1994 812z" fill="url(#armTopR)" />
      <path d="M1143 832 2075 808 2081 1050 2056 1404 1143 1427z" fill="#eaebec" />
      <path d="M2000 812 2076 808 2081 1022 2056 1014 2001 988z" fill="url(#armTopR)" />
      <path d="M1143 1318 1523 1320 1890 1340 2056 1370V1403L1143 1427z" fill="url(#armBottom)" />
      <path d="M1523 709Q1620 709 1698 765L2014 997 2157 1049 1890 1340 1523 1318z" fill="url(#link)" />

      <g stroke="#9a9a9a" strokeWidth="1.2" fill="none">
        <path d="M1143 742 2560 705" strokeDasharray="50 4" stroke="#777" />
        <path d="M1143 1427 2028 1403" strokeDasharray="50 4" stroke="#888" />
        <path d="M1770 816 2516 798" stroke="#b5b5b5" />
        <path d="M1994 720 2001 988" stroke="#b9b9b9" />
        <path d="M2150 716Q2076 728 2076 800L2081 1022" stroke="#a8a8a8" />
        <path d="M2011 1385v18" />
      </g>

      {/* neck between link and rings */}
      <path d="M2014 997 2157 1049 2026 1404 1990 1368 1890 1340Q1920 1130 2014 997z" fill="url(#neck)" />
      <path d="M2004 991Q1900 1140 1890 1340L1975 1329 2062 1120 2020 1010z" fill="url(#lens)" />
      <g stroke="#b0b4b6" strokeWidth="1.6" fill="none">
        <path d="M2004 991Q1900 1140 1890 1340Q1985 1230 2020 1010M2014 997l6 13 42 78M2085 1024 1962 1366M1890 1340 1975 1329" />
      </g>

      {/* spring rings */}
      <path d="M2197 935Q2210 916 2229 922L2328 958Q2352 962 2358 940L2134 1558H2060L2005 1536Q1985 1528 1991 1507z" fill="url(#ringA)" />
      <path d="M2398 831Q2408 811 2429 817L2560 865V1558H2134z" fill="url(#ringB)" />
      <path d="M2197 935Q2210 916 2229 922L2005 1536Q1985 1528 1991 1507z" fill="url(#edgeL)" />
      <path d="M2328 958Q2350 962 2352 958L2134 1558H2110z" fill="url(#edgeM)" />
      <path d="M2398 831Q2408 811 2429 817L2158 1558H2134z" fill="url(#edgeR)" />
      <path d="M2560 1212 2433 1558H2459L2560 1280z" fill="#c9b8a6" opacity="0.2" />
      <path d="M2197 935 1991 1507Q1985 1528 2005 1536L2056 1556V1320z" fill="#88a0a0" opacity="0.16" clipPath="url(#planeClip)" />
      <g fill="none" strokeWidth="1.5">
        <path d="M2228 922 2005 1536M2328 958 2110 1558M2429 817 2158 1558M2560 1212 2433 1558" stroke="#d8b78f" />
        <path d="M2197 935 1991 1507" stroke="#8f8b86" />
        <path d="M2398 831 2134 1558M2560 1280 2459 1558" stroke="#8a7b6a" />
      </g>

      {/* rounded bracket behind the column */}
      <rect x="458" y="786" width="913" height="608" rx="152" fill="#e3e7e8" stroke="#999" strokeWidth="1.2" />
      <path d="M458 938v304" stroke="#777" />
      <path d="M610 1394h609" stroke="#aaa" strokeWidth="2.5" />

      {/* sketch region */}
      <path d="M1143 405H1523A304.5 304.5 0 0 1 1828 709V1013A304.5 304.5 0 0 1 1523 1318H1143z" fill="#e1e5e8" />
      <g clipPath="url(#part)">
        <path d="M1143 742 1828 724V786H1143z" fill="#dfe0e2" />
        <path d="M1143 786H1828V1318H1143z" fill="#d5dadd" />
        <rect x="458" y="786" width="913" height="608" rx="152" fill="#ced4d7" stroke="#a2a6a8" />
        <circle cx="1523" cy="1013.5" r="304.5" fill="#d3d8dc" />
        <path d="M1323 786A304.5 304.5 0 0 1 1523 709Q1620 709 1698 765L1727 786z" fill="#dadce0" />
        <path d="M1143 742 1402 735M1629 729 1828 724" stroke="#999" strokeDasharray="50 4" />
        <circle cx="1523" cy="1013.5" r="304.5" fill="none" stroke="#a6abad" />
        <path d="M1698 765 1828 861" stroke="#a6abad" strokeWidth="1.2" />
      </g>
      <path d="M1828 861 2014 997M1523 1318 1890 1340" stroke="#a8acae" strokeWidth="1.4" />

      {/* column */}
      <path d="M687 1013H1143V1558H687z" fill="#edefeb" />
      <path d="M687 405H1143V1013H687z" fill="#c068d4" />
      <path d="M687 786H1143V1013H687z" fill="#bc62d2" />
      <circle cx="915" cy="557.5" r="42.5" fill="#e1e5e8" />
      <circle cx="915" cy="862" r="42.5" fill="#ced4d7" />

      {/* reference planes */}
      <g fill="none">
        <path d="M332 243H1744.5V1176H332" stroke="#9fd2ee" strokeWidth="2" opacity="0.85" />
        <path d="M332 786H2056V1558" stroke="#6f9dcc" strokeWidth="3" opacity="0.6" />
        <path d="M915 786V1558" stroke="#5f8fc4" strokeWidth="3" opacity="0.6" />
      </g>

      <g fill="none" stroke="#16181a" strokeWidth="3">
        <path d="M687 405H1523M687 1013H1523M687 405V1558M1143 405V1558M1143 1318H1523A304.5 304.5 0 0 0 1828 1013V709" />
        <circle cx="1523" cy="709.5" r="304.5" />
        <circle cx="1523" cy="1013.5" r="152.5" strokeWidth="3.5" />
        <circle cx="915" cy="557.5" r="42.5" />
        <circle cx="915" cy="862" r="42.5" />
      </g>
      <path d={leaders} stroke="#a3afbf" strokeWidth="2" fill="none" />
      {points.map(([x, y]) => <circle key={`${x}-${y}`} cx={x} cy={y} r="4.5" fill="#0d0f10" />)}

      {constraints.map(([x, y, kinds]) =>
        kinds.map((k, i) => (
          <g key={`${x}-${y}-${i}`} transform={`translate(${x + i * 29.8} ${y})`} fill="none" stroke="#444" strokeWidth="1.6">
            <rect width="27" height="27" fill={k === 'cube' || k === 'coinBlue' ? '#def0fa' : '#fff'} stroke="none" />
            <GlyphShape kind={k} />
          </g>
        )),
      )}
    </svg>
  )
}

function ViewCube() {
  return (
    <svg width="220" height="230" viewBox="2330 230 220 230" className="absolute right-[10px] top-[5px]">
      <g fill="#e1e8ee">
        <path d="m2438 245 10 13h-20zM2438 448l10-14h-20zM2337 346l14-10v20zM2540 346l-14-10v20z" />
        <path d="m2366 291v-16l5 4q17-18 38-23l2 8q-18 4-34 21l5 5zM2511 291v-16l-5 4q-17-18-38-23l-2 8q18 4 34 21l-5 5z" />
        <path d="M2414 308h49q1 13 14 14v50q-13 1-14 14h-49q-1-13-15-14v-50q14-1 15-14z" />
      </g>
      <rect x="2408" y="317" width="60" height="60" rx="14" fill="#fff" />
      <path d="M2397 308v80" stroke="#2a2ad8" strokeWidth="2" />
      <path d="M2397 387.5h80" stroke="#e03030" strokeWidth="2" />
      <g className="font-['Roboto',sans-serif]" textAnchor="middle">
        <text x="2438" y="353" fontSize="17" fill="#222">Front</text>
        <text x="2397" y="301" fontSize="18" fontWeight="500" fill="#2a2ad8">Z</text>
        <text x="2490" y="394" fontSize="18" fontWeight="500" fill="#e03030">X</text>
      </g>
      <path d="m2488 427 11-3 12 3v15l-12 5-11-5z" fill="#fff" stroke="#333" strokeWidth="1.5" />
      <path d="M2488 427l11 4v16l-11-5z" fill="#999" /><path d="M2511 427l-12 4v16l12-5z" fill="#ddd" />
      <path d="m2523 433 5 5 5-5z" fill="#333" />
    </svg>
  )
}

function Canvas() {
  return (
    <main className="relative min-w-0 flex-1 overflow-hidden">
      <Model />
      <SketchDialog />
      <ContextBanner />
      <ViewCube />
      <SidePanels />
      <button aria-label="Toggle feature list" className="absolute left-0 top-[632px] flex h-[46px] w-[43px] items-center justify-center border border-l-0 border-[#cfcfcf] bg-white">
        <Icon size={27}><path d="M10 5h16M13 11h13M13 17h13M10 24h16" strokeWidth="1.8" /><path d="m3 4 4 4 4-4M5 12v8" strokeWidth="1.5" /></Icon>
      </button>
      <div className="absolute bottom-0 right-0 flex h-10 w-[149px] items-center justify-around bg-white/75 px-1.5 text-[#333]">
        <Icon size={26}><ellipse cx="17" cy="9" rx="8" ry="4.5" /><ellipse cx="17" cy="9" rx="3" ry="1.5" /><path d="M25 9v7q-1 4-8 4M9 9v6H2v6h17M6 18v3M10 18v3M14 18v3" /></Icon>
        <Icon size={28}><path d="M2 21a12 12 0 0 1 24 0zM9 20a5 5 0 0 1 10 0z" /><path d="M5 21a9 9 0 0 1 18 0" strokeDasharray="2 2" /></Icon>
        <FaBalanceScale size={22} />
      </div>
    </main>
  )
}

/* ---------- document tabs ---------- */

const folderIcon = <path d="M3 4h9l2 4h11v16H3z" strokeWidth="1.8" fill="#fff" />

const docTabs: { name: string; icon: ReactNode; active?: boolean }[] = [
  { name: 'Main Assembly', icon: <><path d="M2 2h17l6 5v19H8l-6-5z" strokeWidth="1.8" fill="#fff" /><path d="M2 2h14v15H7L2 8z" fill="#999" /><path d="M7 7h12v13" strokeWidth="1.5" /></> },
  { name: 'Part Studio 1', active: true, icon: <><path d="M2 12l4-3 6 3v14H5l-3-3zM5 14h7M5 14v12M14 2h6l5 5v19H15V2M19 7v19M15 3l4 4h6" strokeWidth="1.6" /></> },
  { name: 'Part', icon: folderIcon },
  { name: 'Assembly', icon: folderIcon },
]

function DocTabs() {
  return (
    <div className="flex h-[39px] shrink-0 bg-[#d4d4d4] text-lg text-[#555]">
      <button aria-label="Add tab" className="flex w-[53px] items-center justify-center pr-2"><Plus size={26} strokeWidth={3} color="#666" /></button>
      {docTabs.map((t) => (
        <button
          key={t.name}
          className={
            t.active
              ? 'mr-0.5 flex w-[271px] items-center gap-1 border-b-[3px] border-[#1651b0] bg-white pl-3.5 text-[#333]'
              : 'mr-0.5 mb-[3px] flex w-[271px] items-center gap-1 rounded-b-md bg-[#e9e9e9] pl-3.5 shadow-[0_2px_2px_rgba(0,0,0,0.2)]'
          }
        >
          <Icon size={26}>{t.icon}</Icon>
          {t.name}
        </button>
      ))}
    </div>
  )
}

export default function App() {
  return (
    <div className="flex h-screen flex-col overflow-hidden bg-white font-['Roboto',sans-serif]">
      <TabStrip />
      <NavBar />
      <Header />
      <div className="flex min-h-0 flex-1 border-b-[3px] border-[#1f1a24]">
        <Rail />
        <div className="flex min-w-0 flex-1 flex-col">
          <Toolbar />
          <div className="flex min-h-0 flex-1">
            <FeaturePanel />
            <Canvas />
          </div>
          <DocTabs />
        </div>
      </div>
    </div>
  )
}
